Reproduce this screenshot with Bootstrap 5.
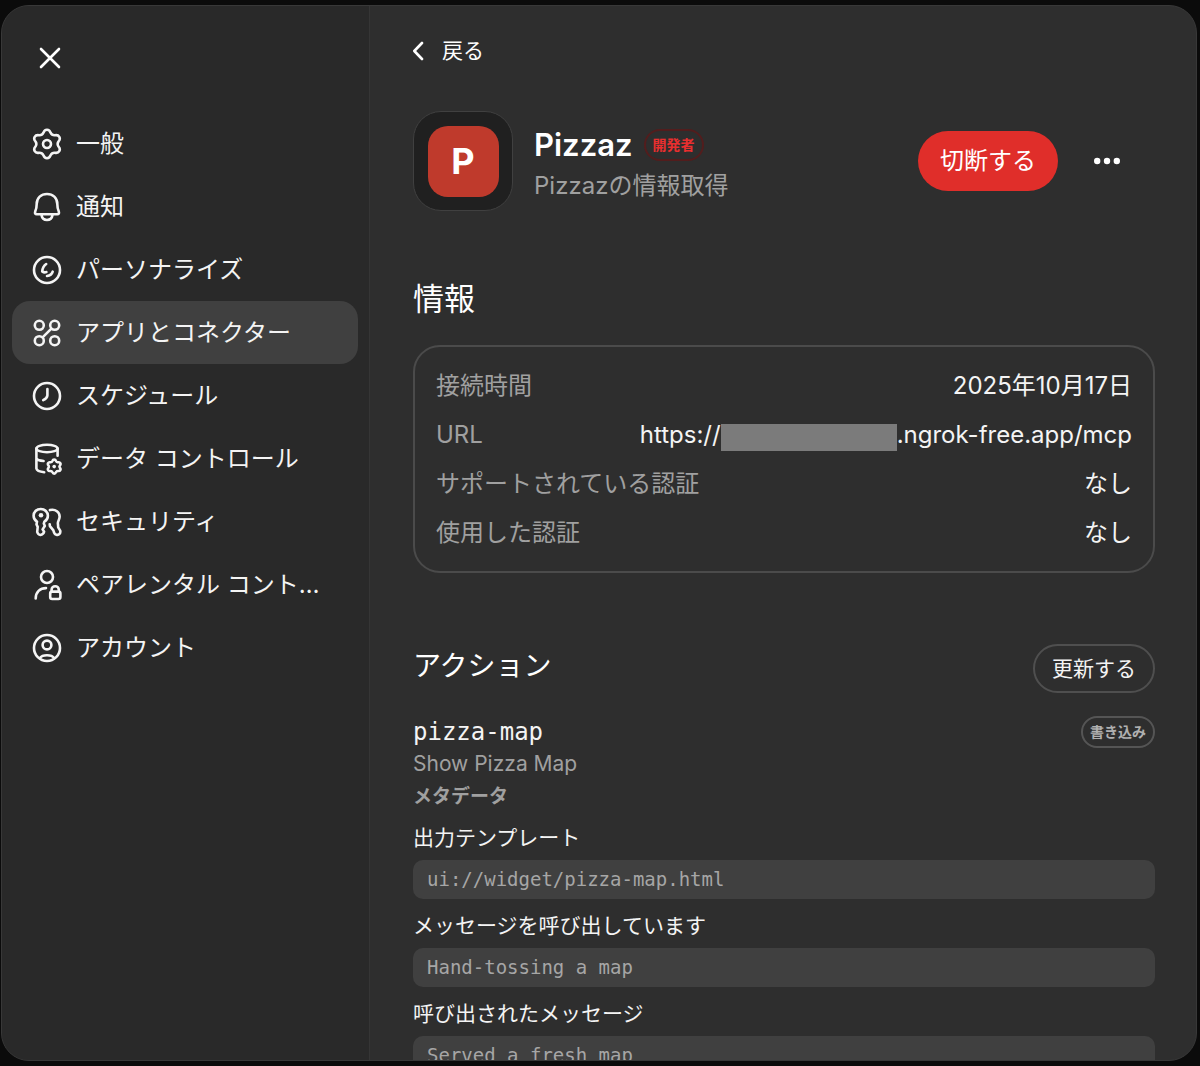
<!DOCTYPE html>
<html lang="ja" data-bs-theme="dark">
<head>
<meta charset="utf-8">
<meta name="viewport" content="width=device-width, initial-scale=1">
<title>アプリとコネクター</title>
<link href="https://cdn.jsdelivr.net/npm/bootstrap@5.3.0/dist/css/bootstrap.min.css" rel="stylesheet">
<style>
body{background:#0b0b0b;color:#f4f4f4;font-family:Inter,"Noto Sans CJK JP",sans-serif;font-size:24px;line-height:32px}
.settings{height:calc(100vh - 10px);margin:5px 3px 5px 1px;border:1px solid #383838;border-radius:28px;background:#2e2e2e;overflow:hidden}
.side{width:368px;background:#292929;border-right:1px solid #353535;padding:22px 11px 22px 10px}
.side .nav-link{height:63px;padding:0 20px;gap:14px;border-radius:18px;color:#f4f4f4;line-height:32px}
.side .nav-link.active{background:#404040}
.side .nav-link svg{width:30px;height:32px}
.side .btn-close-x{width:60px;height:60px;margin:0 8px 24px}
svg{fill:none;stroke:currentColor;stroke-width:2.6;stroke-linecap:round;stroke-linejoin:round;flex:none}
svg .dot{fill:currentColor;stroke:none}
.plain{background:none;border:0;color:#fff;padding:0}
.detail{padding:28px 41px 0 43px;overflow-y:auto;scrollbar-width:none;min-width:0}
.back{font-size:21px;height:34px;gap:12px}
.applogo{width:100px;height:100px;border:1px solid #404040;border-radius:28px;background:#202020}
.applogo span{width:71px;height:71px;border-radius:20px;background:#bf3a2c;font-size:36px;font-weight:700;color:#fff}
.apphead{margin-top:43px;gap:21px}
.apphead h1{font-size:31px;font-weight:600;line-height:42px;color:#fff}
.apptitle{gap:11px}
.appname{padding-top:3px}
.appname .muted{margin-top:4px}
.muted{color:#a0a0a0}
.pill{font-size:14px;font-weight:700;height:32px;padding:0 7px;border:2px solid #555;border-radius:16px;line-height:28px;color:#b0b0b0}
.pill.dev{border-color:#521d1d;color:#e92f2f}
.btn-cut{height:60px;padding:0 21px;border-radius:30px;background:#e02e2a;color:#fff;font-size:24px}
.btn-dots{width:60px;height:60px;margin:0 18px 0 19px}
h2{line-height:44px;font-weight:400}
.h-info{font-size:31px;margin-top:66px}
.h-act{font-size:28px}
.infobox{margin-top:24px;padding:14px 21px;border:2px solid #4b4b4b;border-radius:27px}
.infobox>div{height:49px}
.infobox dt,.meta dt{font-weight:400}
.masked{width:176px;height:27px;background:#7b7b7b;margin-top:5px}
.acts{margin-top:71px;height:49px}
.btn-upd{height:49px;border:2px solid #4f4f4f;border-radius:25px;font-size:21px;color:#f4f4f4;padding:0 17px}
.mono,.meta dd{font-family:"DejaVu Sans Mono","Noto Sans CJK JP",monospace}
.tool{margin-top:23px;height:32px}
.desc{font-size:21px;line-height:32px}
.sub{font-size:19px;font-weight:700;line-height:34px}
.meta dt{font-size:21px;height:49px;padding-top:4px;line-height:45px}
.meta dd{font-size:19px;height:39px;line-height:38px;padding:0 14px;border-radius:10px;background:#404040;color:#a6a6a6}
.meta{margin-top:-3px}
</style>
<script src="https://cdn.jsdelivr.net/npm/bootstrap@5.3.0/dist/js/bootstrap.bundle.min.js"></script>
</head>
<body>
<div class="settings d-flex" role="dialog" aria-label="設定">
  <aside class="side flex-shrink-0">
    <button class="plain btn-close-x d-flex align-items-center justify-content-center" type="button" aria-label="閉じる">
      <svg width="24" height="24" viewBox="-12 -12 24 24"><path d="M-9-9 9 9M9-9-9 9"/></svg>
    </button>
    <nav class="nav flex-column flex-nowrap">
      <a class="nav-link d-flex align-items-center" href="#"><svg viewBox="-15 -16 30 32"><path id="cog" d="M-3.6-11.2C-2.3-15.2 2.3-15.2 3.6-11.2Q4.9-8.5 7.9-8.7C12-9.6 14.3-5.6 11.5-2.5Q9.8 0 11.5 2.5C14.3 5.6 12 9.6 7.9 8.7Q4.9 8.5 3.6 11.2C2.3 15.2-2.3 15.2-3.6 11.2Q-4.9 8.5-7.9 8.7C-12 9.6-14.3 5.6-11.5 2.5Q-9.8 0-11.5-2.5C-14.3-5.6-12-9.6-7.9-8.7Q-4.9-8.5-3.6-11.2Z"/><circle r="4"/></svg><span>一般</span></a>
      <a class="nav-link d-flex align-items-center" href="#"><svg viewBox="-15 -16 30 32"><path d="M-10.3-3C-10.3-9.3-5.8-13 0-13S10.3-9.3 10.3-3C10.3 0 10.9 2.5 11.8 4.6Q12.6 7.2 10.2 7.2H-10.2Q-12.6 7.2-11.8 4.6C-10.9 2.5-10.3 0-10.3-3ZM-5.5 8C-4.5 14.6 4.5 14.6 5.5 8"/></svg><span>通知</span></a>
      <a class="nav-link d-flex align-items-center" href="#"><svg viewBox="-15 -16 30 32"><circle r="13"/><path d="M-.8-6Q-4.4-3.5-4.8 1.4-3 2.8-.6 2.1M5.7 1.7Q4.6 5.6 0 6"/></svg><span>パーソナライズ</span></a>
      <a class="nav-link active d-flex align-items-center" href="#" aria-current="page"><svg viewBox="-15 -16 30 32"><circle cx="-7.7" cy="-7.7" r="4.5"/><circle cx="7.7" cy="-7.7" r="4.5"/><circle cx="-7.7" cy="7.7" r="4.5"/><circle cx="7.7" cy="7.7" r="4.5"/><path d="M-4.4 4.4 4.4-4.4"/></svg><span>アプリとコネクター</span></a>
      <a class="nav-link d-flex align-items-center" href="#"><svg viewBox="-15 -16 30 32"><circle r="13"/><path d="M.4-7V-.6Q.2 2.2-3.8 4.2"/></svg><span>スケジュール</span></a>
      <a class="nav-link d-flex align-items-center" href="#"><svg viewBox="-15 -16 30 32"><ellipse cy="-10.5" rx="10.6" ry="3.7"/><path d="M-10.6-10.5V9.6Q-10 12.6-2.8 13.2M10.6-10.5V-3.2M-10.6-.6Q-9.6 1.6-3.4 2"/><g transform="translate(7.2 7.6) scale(.5)" stroke-width="5"><use href="#cog"/></g><use href="#cog" transform="translate(7.2 7.6) scale(.47)"/><circle class="dot" cx="7.2" cy="7.6" r="1.8"/></svg><span>データ コントロール</span></a>
      <a class="nav-link d-flex align-items-center" href="#"><svg viewBox="-15 -16 30 32"><path d="M-6.2-13C-10.6-13-13.4-10-13.4-6.2-13.4-3.4-12-1.5-10-.4L-10.5 2.4-9.3 4.8-9.8 10Q-9 12.8-6.6 13-3.6 12.6-2.9 9.8L-4.4 7.4-2.2 4-3.2 1.6-2.6-.4C-.4-1.6.9-3.6.9-6.2.9-10-2.2-13-6.2-13ZM2.9-11.9C8.4-13.4 12.9-9.8 12.6-5 12.4-1.8 10.2-.4 11 2.3L11.2 5.4 13.2 8.6C13.8 11.2 12 13.4 9.4 12.7 7.2 12.2 6.8 10 6.4 8.4L2.9 4.2 2.7 2.2"/><circle class="dot" cx="-6" cy="-6.7" r="2.3"/></svg><span>セキュリティ</span></a>
      <a class="nav-link d-flex align-items-center" href="#"><svg viewBox="-15 -16 30 32"><circle cy="-8" r="6"/><path d="M-11.3 13.5C-11.3 7-7 3.1-1 3.1M4.6 6V4.8A3.6 3.6 0 0 1 11.8 4.8V6"/><rect x="3.2" y="6.6" width="10.2" height="7.4" rx="2"/></svg><span class="text-truncate">ペアレンタル コント…</span></a>
      <a class="nav-link d-flex align-items-center" href="#"><svg viewBox="-15 -16 30 32"><circle r="13"/><circle cy="-3" r="4.4"/><path d="M-7.2 10.2C-4.5 6.3 4.5 6.3 7.2 10.2"/></svg><span>アカウント</span></a>
    </nav>
  </aside>
  <main class="detail flex-grow-1">
    <button class="plain back d-flex align-items-center" type="button"><svg width="17" height="22" viewBox="0 0 17 22"><path d="M9 3 1.3 11 9 19"/></svg>戻る</button>
    <header class="apphead d-flex align-items-center">
      <div class="applogo d-flex align-items-center justify-content-center flex-shrink-0"><span class="d-flex align-items-center justify-content-center">P</span></div>
      <div class="appname flex-grow-1">
        <div class="apptitle d-flex align-items-center"><h1 class="mb-0">Pizzaz</h1><span class="pill dev">開発者</span></div>
        <div class="muted">Pizzazの情報取得</div>
      </div>
      <div class="d-flex align-items-center flex-shrink-0">
        <button class="btn btn-cut" type="button">切断する</button>
        <button class="plain btn-dots" type="button" aria-label="その他"><svg class="d-block mx-auto" width="30" height="10" viewBox="-15 -5 30 10"><circle class="dot" cx="-9.8" r="3.2"/><circle class="dot" r="3.2"/><circle class="dot" cx="9.8" r="3.2"/></svg></button>
      </div>
    </header>
    <h2 class="h-info mb-0">情報</h2>
    <dl class="infobox mb-0">
      <div class="d-flex align-items-center justify-content-between"><dt class="muted">接続時間</dt><dd class="mb-0">2025年10月17日</dd></div>
      <div class="d-flex align-items-center justify-content-between"><dt class="muted">URL</dt><dd class="mb-0 d-flex align-items-center">https://<span class="masked"></span>.ngrok-free.app/mcp</dd></div>
      <div class="d-flex align-items-center justify-content-between"><dt class="muted">サポートされている認証</dt><dd class="mb-0">なし</dd></div>
      <div class="d-flex align-items-center justify-content-between"><dt class="muted">使用した認証</dt><dd class="mb-0">なし</dd></div>
    </dl>
    <div class="acts d-flex justify-content-between">
      <h2 class="h-act mb-0">アクション</h2>
      <button class="btn btn-upd" type="button">更新する</button>
    </div>
    <div class="tool d-flex align-items-center justify-content-between"><span class="mono">pizza-map</span><span class="pill">書き込み</span></div>
    <div class="desc muted">Show Pizza Map</div>
    <div class="sub muted">メタデータ</div>
    <dl class="meta mb-0">
      <dt>出力テンプレート</dt><dd class="mb-0">ui://widget/pizza-map.html</dd>
      <dt>メッセージを呼び出しています</dt><dd class="mb-0">Hand-tossing a map</dd>
      <dt>呼び出されたメッセージ</dt><dd class="mb-0">Served a fresh map</dd>
    </dl>
  </main>
</div>
</body>
</html>
